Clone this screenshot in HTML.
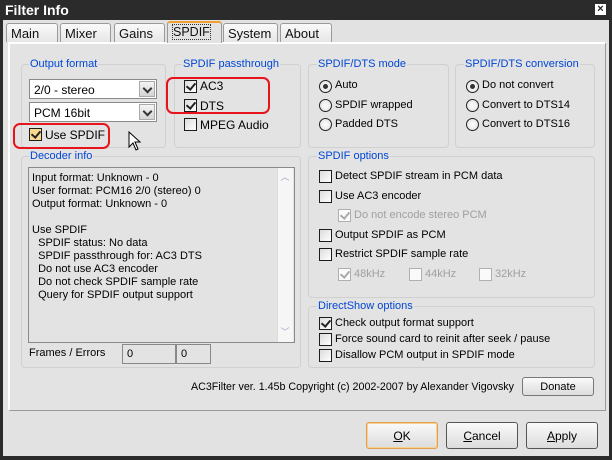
<!DOCTYPE html>
<html><head><style>
*{box-sizing:border-box;margin:0;padding:0}
body{width:612px;height:460px;overflow:hidden;background:#2b2b2b;font-family:"Liberation Sans",sans-serif;font-size:11px;color:#000;position:relative}
.a{position:absolute}
.win{left:3px;top:20px;width:606px;height:436px;background:#e2e2e2}
.title{left:5px;top:2px;color:#fff;font-weight:bold;font-size:14px}
.tab{top:23px;height:19px;background:linear-gradient(#fafafa,#e6e6e6);border:1px solid #9a9a9a;border-bottom:none;border-radius:3px 3px 0 0;font-size:13px;padding:2px 0 0 4px;color:#111}
.panel{left:8px;top:42px;width:598px;height:369px;background:#e3e3e3;border:1px solid #9a9a9a;border-left:2px solid #fff;border-top:2px solid #fff}
.grp{border:1px solid #d0d0d0;border-radius:4px}
.gt{color:#0046d5;background:#e3e3e3;padding:0 1px}
.cb{width:13px;height:13px;border:1px solid #1c1c1c;background:linear-gradient(135deg,#dcdcdc,#fff)}
.cb.dis{border-color:#b0b0b0;background:#fafafa}
.ck::after{content:"";position:absolute;left:3px;top:0px;width:4px;height:7px;border:solid #222;border-width:0 2px 2px 0;transform:rotate(40deg)}
.ck.dis::after{border-color:#aaa}
.rd{width:13px;height:13px;border:1px solid #222;border-radius:50%;background:radial-gradient(#fff,#ddd)}
.rd.on::after{content:"";position:absolute;left:3px;top:3px;width:5px;height:5px;border-radius:50%;background:#333}
.gray{color:#a0a0a0}
.combo{height:20px;width:128px;background:#fff;border:1px solid #8a8a8a;padding:3px 0 0 4px;font-size:12px}
.combo b{position:absolute;right:1px;top:1px;width:16px;height:16px;background:linear-gradient(#f4f4f4,#d4d4d4);border:1px solid #aaa}
.combo b::after{content:"";position:absolute;left:4px;top:3px;width:5px;height:5px;border:solid #333;border-width:0 2px 2px 0;transform:rotate(45deg)}
.btn{height:27px;width:72px;border:1px solid #555;border-radius:3px;background:linear-gradient(#fafafa,#dcdcdc);text-align:center;padding-top:6px;font-size:12px}
.red{border:2px solid #e8141b;border-radius:7px}
</style></head><body>
<div class="a title">Filter Info</div>
<div class="a" style="right:6px;top:4px;width:11px;height:11px;background:#fff;color:#222;font:bold 11px/11px 'Liberation Sans';text-align:center">×</div>
<div class="a win"></div>
<div class="a tab" style="left:6px;width:52px">Main</div>
<div class="a tab" style="left:60px;width:51px">Mixer</div>
<div class="a tab" style="left:114px;width:51px">Gains</div>
<div class="a tab" style="left:223px;width:55px">System</div>
<div class="a tab" style="left:280px;width:52px">About</div>
<div class="a panel"></div>
<div class="a tab" style="left:167px;top:21px;width:55px;height:22px;background:#e3e3e3;border-top:2px solid #f0a030;z-index:2;font-size:12.5px;padding-left:5px"><span style="outline:1px dotted #333">SPDIF</span></div>

<div class="a grp" style="left:21px;top:64px;width:145px;height:84px"></div>
<div class="a gt" style="left:29px;top:58px">Output format</div>
<div class="a combo" style="left:29px;top:79px">2/0 - stereo<b></b></div>
<div class="a combo" style="left:29px;top:102px">PCM 16bit<b></b></div>
<div class="a cb ck" style="left:29px;top:128px;background:#fbd88f"></div>
<div class="a" style="left:45px;top:128px;font-size:12px">Use SPDIF</div>
<div class="a red" style="left:13px;top:123px;width:97px;height:26px"></div>
<svg class="a" style="left:128px;top:131px" width="14" height="22"><path d="M1 1 L1 16 L5 12 L8 19 L10 18 L7 11 L12 11 Z" fill="#fff" stroke="#000"/></svg>

<div class="a grp" style="left:174px;top:64px;width:127px;height:84px"></div>
<div class="a gt" style="left:182px;top:58px">SPDIF passthrough</div>
<div class="a cb ck" style="left:184px;top:80px"></div><div class="a" style="left:200px;top:79px;font-size:12px">AC3</div>
<div class="a cb ck" style="left:184px;top:99px"></div><div class="a" style="left:200px;top:99px;font-size:12px">DTS</div>
<div class="a cb" style="left:184px;top:118px"></div><div class="a" style="left:200px;top:118px;font-size:12px">MPEG Audio</div>
<div class="a red" style="left:166px;top:77px;width:104px;height:37px"></div>

<div class="a grp" style="left:308px;top:64px;width:141px;height:84px"></div>
<div class="a gt" style="left:317px;top:58px">SPDIF/DTS mode</div>
<div class="a rd on" style="left:319px;top:80px"></div><div class="a" style="left:335px;top:79px">Auto</div>
<div class="a rd" style="left:319px;top:99px"></div><div class="a" style="left:335px;top:99px">SPDIF wrapped</div>
<div class="a rd" style="left:319px;top:118px"></div><div class="a" style="left:335px;top:118px">Padded DTS</div>

<div class="a grp" style="left:455px;top:64px;width:140px;height:84px"></div>
<div class="a gt" style="left:464px;top:58px">SPDIF/DTS conversion</div>
<div class="a rd on" style="left:466px;top:80px"></div><div class="a" style="left:482px;top:79px">Do not convert</div>
<div class="a rd" style="left:466px;top:99px"></div><div class="a" style="left:482px;top:99px">Convert to DTS14</div>
<div class="a rd" style="left:466px;top:118px"></div><div class="a" style="left:482px;top:118px">Convert to DTS16</div>

<div class="a grp" style="left:21px;top:156px;width:280px;height:212px"></div>
<div class="a gt" style="left:29px;top:150px">Decoder info</div>
<div class="a" style="left:28px;top:167px;width:267px;height:176px;border:1px solid #8a8a8a;background:#e3e3e3;padding:4px 0 0 3px;line-height:13px;white-space:pre">Input format: Unknown - 0
User format: PCM16 2/0 (stereo) 0
Output format: Unknown - 0

Use SPDIF
  SPDIF status: No data
  SPDIF passthrough for: AC3 DTS
  Do not use AC3 encoder
  Do not check SPDIF sample rate
  Query for SPDIF output support</div>
<div class="a" style="left:277px;top:168px;width:16px;height:174px;background:#f6f6f6;border-left:1px solid #ddd"></div>
<div class="a" style="left:278px;top:170px;width:14px;height:16px;color:#9ab;text-align:center;font-size:9px">︿</div>
<div class="a" style="left:278px;top:325px;width:14px;height:16px;color:#9ab;text-align:center;font-size:9px">﹀</div>
<div class="a" style="left:29px;top:347px">Frames / Errors</div>
<div class="a" style="left:122px;top:344px;width:54px;height:20px;border:1px solid #888;padding:3px 0 0 4px">0</div>
<div class="a" style="left:176px;top:344px;width:35px;height:20px;border:1px solid #888;padding:3px 0 0 4px">0</div>

<div class="a grp" style="left:308px;top:156px;width:287px;height:142px"></div>
<div class="a gt" style="left:317px;top:150px">SPDIF options</div>
<div class="a cb" style="left:319px;top:170px"></div><div class="a" style="left:335px;top:170px">Detect SPDIF stream in PCM data</div>
<div class="a cb" style="left:319px;top:190px"></div><div class="a" style="left:335px;top:190px">Use AC3 encoder</div>
<div class="a cb ck dis" style="left:338px;top:209px"></div><div class="a gray" style="left:354px;top:209px">Do not encode stereo PCM</div>
<div class="a cb" style="left:319px;top:229px"></div><div class="a" style="left:335px;top:229px">Output SPDIF as PCM</div>
<div class="a cb" style="left:319px;top:248px"></div><div class="a" style="left:335px;top:248px">Restrict SPDIF sample rate</div>
<div class="a cb ck dis" style="left:338px;top:268px"></div><div class="a gray" style="left:354px;top:268px">48kHz</div>
<div class="a cb dis" style="left:409px;top:268px"></div><div class="a gray" style="left:425px;top:268px">44kHz</div>
<div class="a cb dis" style="left:479px;top:268px"></div><div class="a gray" style="left:495px;top:268px">32kHz</div>

<div class="a grp" style="left:308px;top:306px;width:287px;height:62px"></div>
<div class="a gt" style="left:317px;top:300px">DirectShow options</div>
<div class="a cb ck" style="left:319px;top:317px"></div><div class="a" style="left:335px;top:317px">Check output format support</div>
<div class="a cb" style="left:319px;top:333px"></div><div class="a" style="left:335px;top:333px">Force sound card to reinit after seek / pause</div>
<div class="a cb" style="left:319px;top:349px"></div><div class="a" style="left:335px;top:349px">Disallow PCM output in SPDIF mode</div>

<div class="a" style="left:191px;top:381px;font-size:10.7px">AC3Filter ver. 1.45b Copyright (c) 2002-2007 by Alexander Vigovsky</div>
<div class="a btn" style="left:522px;top:377px;height:19px;padding-top:3px;font-size:11px;border-color:#777">Donate</div>

<div class="a btn" style="left:366px;top:422px;border-color:#e0a050;box-shadow:inset 0 0 0 1px #f8d090"><u>O</u>K</div>
<div class="a btn" style="left:446px;top:422px"><u>C</u>ancel</div>
<div class="a btn" style="left:526px;top:422px"><u>A</u>pply</div>
</body></html>
